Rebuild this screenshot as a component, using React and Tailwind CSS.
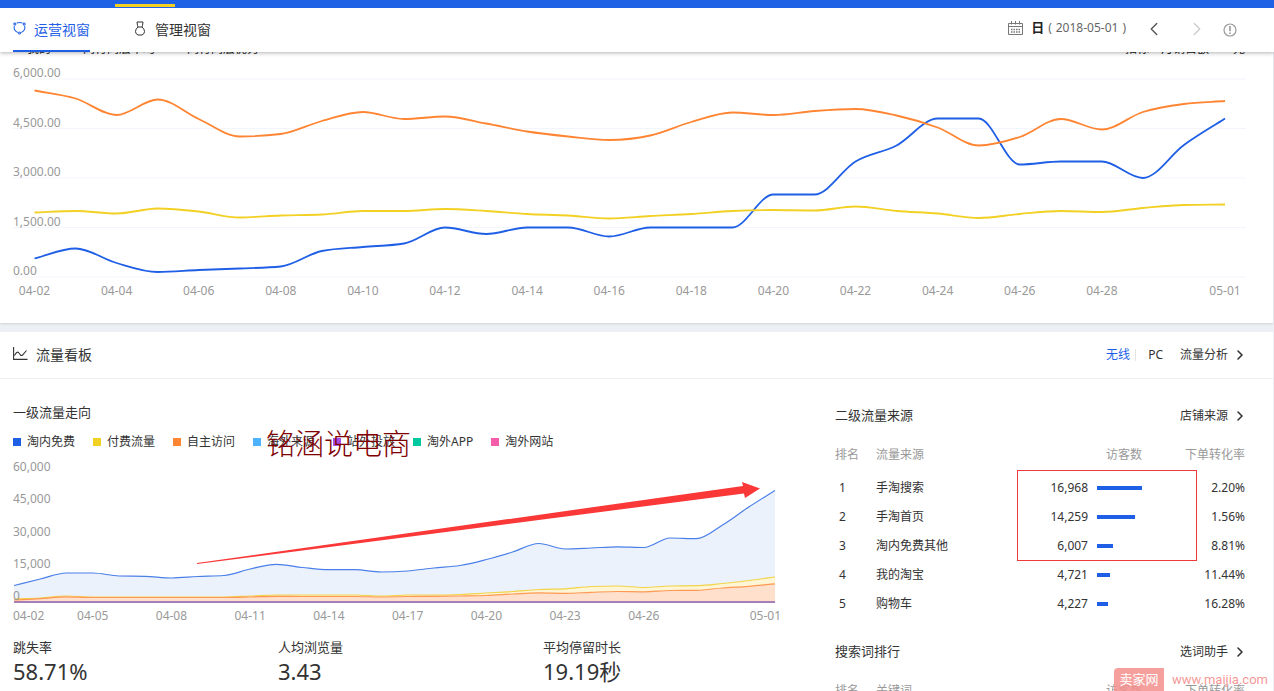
import { ChevronLeft, ChevronRight } from "lucide-react";

const trendSeries = [
  {
    color: "#1f5fe6",
    y: [258.5, 248.5, 263, 272, 270, 268.5, 266.5, 251, 247, 243.5, 227.5, 234, 227.5, 227.5, 236.5, 227.5, 227.5, 227.5, 194.5, 194.5, 161.5, 145.5, 118.5, 118.5, 164.5, 161.5, 161.5, 178, 145, 118.5],
  },
  {
    color: "#f2d024",
    y: [212.5, 211, 213.5, 208.5, 211.5, 217.5, 215.5, 214.5, 211, 211, 209, 211, 214, 215.5, 218.5, 216, 214, 211, 210, 210.5, 206.5, 211, 213.5, 218, 214, 211, 212, 208, 205, 204.5],
  },
  {
    color: "#ff8533",
    y: [90.5, 98.5, 115, 99.5, 119, 136.5, 134, 121, 112, 119, 116.5, 123.5, 131.5, 136.5, 140, 135.5, 122, 112.5, 115, 111, 109, 115.5, 127.5, 145.5, 137, 119, 129.5, 112, 104, 101],
  },
];

const trendTicks = [
  ["6,000.00", 79],
  ["4,500.00", 128.5],
  ["3,000.00", 178],
  ["1,500.00", 227.5],
  ["0.00", 277],
];

const flowSeries = [
  {
    color: "#4a7fe8",
    fill: "#ebf2fc",
    y: [585.5, 579, 573, 573, 576, 576.3, 578, 576.5, 575.5, 569, 564.3, 567.5, 569.7, 569.7, 572, 571, 568, 565.5, 559.5, 552, 543.5, 549, 548, 546.8, 547.5, 538, 538.7, 525, 507, 490.5],
  },
  {
    color: "#f2d349",
    fill: "#fdf5d3",
    y: [599, 598, 596, 597, 597, 597, 597, 597, 597, 596, 595, 595, 595, 595, 596, 595, 595, 594.5, 593, 591.5, 589.5, 588.8, 586.5, 586, 587.5, 586, 585.7, 583.5, 580.5, 577],
  },
  {
    color: "#ff9955",
    fill: "#ffe0cc",
    y: [600, 598.7, 596.8, 597.5, 597.5, 597.5, 597.5, 597.5, 597.5, 597, 596.3, 596.5, 596.5, 596.5, 597, 596.5, 596.3, 596, 595.5, 594, 592.8, 593.3, 592.3, 591.5, 591.8, 590.5, 590.3, 588, 586.3, 583.8],
  },
];

const flowTicks = [
  ["60,000", 471],
  ["45,000", 503],
  ["30,000", 536],
  ["15,000", 568],
  ["0", 600],
];

const legend = [
  { label: "淘内免费", dot: "bg-[#1f5fe6]" },
  { label: "付费流量", dot: "bg-[#f2d024]" },
  { label: "自主访问", dot: "bg-[#ff8533]" },
  { label: "海外来源", dot: "bg-[#4db3ff]" },
  { label: "站外投放", dot: "bg-[#a64de6]" },
  { label: "淘外APP", dot: "bg-[#00c9a0]" },
  { label: "淘外网站", dot: "bg-[#f75ca8]" },
];

const stats = [
  { label: "跳失率", value: "58.71%" },
  { label: "人均浏览量", value: "3.43" },
  { label: "平均停留时长", value: "19.19秒" },
];

const sources = [
  { name: "手淘搜索", visitors: 16968, rate: "2.20%" },
  { name: "手淘首页", visitors: 14259, rate: "1.56%" },
  { name: "淘内免费其他", visitors: 6007, rate: "8.81%" },
  { name: "我的淘宝", visitors: 4721, rate: "11.44%" },
  { name: "购物车", visitors: 4227, rate: "16.28%" },
];

// Monotone cubic interpolation, so flat stretches stay flat
function smoothPath(ys, x0, step) {
  const n = ys.length;
  const slopes = ys.slice(1).map((y, i) => (y - ys[i]) / step);
  const tangent = (i) => {
    if (i === 0) return slopes[0];
    if (i === n - 1) return slopes[n - 2];
    const a = slopes[i - 1];
    const b = slopes[i];
    if (a * b <= 0) return 0;
    return Math.sign(a) * Math.min(Math.abs(a) * 2, Math.abs(b) * 2, Math.abs(a + b) / 2);
  };
  let d = `M${x0},${ys[0]}`;
  for (let i = 1; i < n; i++) {
    const xa = x0 + (i - 1) * step;
    const xb = x0 + i * step;
    const h = step / 3;
    d += `C${xa + h},${ys[i - 1] + tangent(i - 1) * h} ${xb - h},${ys[i] - tangent(i) * h} ${xb},${ys[i]}`;
  }
  return d;
}

function dayLabel(i) {
  return i === 29 ? "05-01" : `04-${String(i + 2).padStart(2, "0")}`;
}

function TrendChart() {
  const step = 1190.5 / 29;
  const days = [0, 2, 4, 6, 8, 10, 12, 14, 16, 18, 20, 22, 24, 26, 29];
  return (
    <svg viewBox="0 61 1273 262" className="block w-full h-auto text-[12px] fill-[#999]">
      {trendTicks.map(([label, y]) => (
        <g key={label}>
          <line x1="13" x2="1246" y1={y} y2={y} stroke="#f3f5fc" />
          <text x="13" y={y - 2}>{label}</text>
        </g>
      ))}
      {days.map((i) => (
        <text key={i} x={34.5 + i * step} y="295" textAnchor="middle">
          {dayLabel(i)}
        </text>
      ))}
      {trendSeries.map((s) => (
        <path key={s.color} d={smoothPath(s.y, 34.5, step)} fill="none" stroke={s.color} strokeWidth="1.8" />
      ))}
    </svg>
  );
}

function FlowChart() {
  const step = 761 / 29;
  const days = [3, 6, 9, 12, 15, 18, 21, 24];
  return (
    <svg viewBox="13 454 770 176" className="block w-full h-auto text-[12px] fill-[#999]">
      {flowSeries.map((s) => {
        const d = smoothPath(s.y, 14, step);
        return (
          <g key={s.color}>
            <path d={`${d}V603H14Z`} fill={s.fill} />
            <path d={d} fill="none" stroke={s.color} strokeWidth="1.2" />
          </g>
        );
      })}
      <rect x="14" y="601" width="761" height="2" fill="#a77fb6" />
      {flowTicks.map(([label, y]) => (
        <text key={label} x="13" y={y}>{label}</text>
      ))}
      <text x="13" y="620">04-02</text>
      {days.map((i) => (
        <text key={i} x={14 + i * step} y="620" textAnchor="middle">
          {dayLabel(i)}
        </text>
      ))}
      <text x="781" y="620" textAnchor="end">05-01</text>
      <path d="M197 563 743 486 742 482 760 488.500 745 498 744 493.500 197 564Z" fill="#fb3838" />
    </svg>
  );
}

function MoreLink({ children }) {
  return (
    <a href="#" className="flex items-center gap-1 text-[12px] leading-5">
      {children}
      <ChevronRight className="w-4 h-4" strokeWidth={2.4} />
    </a>
  );
}

function Header() {
  return (
    <header className="relative z-10 bg-white shadow-[0_1px_4px_rgba(0,0,0,0.3)]">
      <div className="h-2 bg-[#1f62e6] pl-[115px] pt-1">
        <div className="w-[60px] h-[3px] bg-[#f5d020]" />
      </div>
      <div className="flex items-stretch justify-between h-11 pl-[13px] pr-[37px]">
        <nav className="flex gap-11 text-[14px]">
          <a href="#" className="flex items-center gap-2 text-[#1f5fe6] border-b-2 border-[#1f5fe6]">
            <svg viewBox="0 0 14 14" className="w-[13px] h-[14px] -mt-0.5" fill="none" stroke="currentColor" strokeWidth="1.100">
              <path d="M4 1.700Q7 .6 10 1.700M12.500 4.500A5.800 5.800 0 0 1 8.800 11.900M5.200 11.900A5.800 5.800 0 0 1 1.500 4.500" />
              <circle cx="2" cy="2.600" r="1.100" />
              <circle cx="12" cy="2.600" r="1.100" />
              <circle cx="7" cy="12.400" r="1.100" />
            </svg>
            运营视窗
          </a>
          <a href="#" className="flex items-center gap-[9px] text-[#333] border-b-2 border-transparent">
            <svg viewBox="0 0 12 15" className="w-3 h-[15px] -mt-0.5" fill="none" stroke="currentColor" strokeWidth="1">
              <path d="M3 1H9L8.500 4.500 8 6H4L3.500 4.500ZM4 6Q1.500 8 1.500 10.500T4 14H8Q10.500 13 10.500 10.500T8 6" />
            </svg>
            管理视窗
          </a>
        </nav>
        <div className="flex items-center pb-1">
          <svg viewBox="0 0 15 14" className="w-[15px] h-[14px]" fill="none" stroke="#777" strokeWidth="1">
            <path d="M.5 2.500H14.500V13.500H.5ZM.5 5.500H14.500M3.500 0V3.500M7.500 0V3.500M11.500 0V3.500" />
            <path d="M3 8.500H12M3 11H12" strokeWidth="1.300" strokeDasharray="1.500 1" />
          </svg>
          <span className="flex items-center gap-1 ml-2 text-[12px] text-[#666]">
            <b className="text-[13px] text-[#222]">日</b>
            <span className="flex gap-1">
              <span>(</span>
              <time>2018-05-01</time>
              <span>)</span>
            </span>
          </span>
          <button aria-label="前一天" className="ml-[17px] mt-0.5 text-[#555]">
            <ChevronLeft className="w-[22px] h-[22px]" strokeWidth={1.5} />
          </button>
          <button aria-label="后一天" className="ml-[21px] mt-0.5 text-[#ccc]">
            <ChevronRight className="w-[22px] h-[22px]" strokeWidth={1.5} />
          </button>
          <button aria-label="说明" className="ml-[15px] mt-1 text-[#999]">
            <svg viewBox="0 0 14 14" className="w-[14px] h-[14px]" fill="none" stroke="currentColor" strokeWidth="1.200">
              <circle cx="7" cy="7" r="6" />
              <path d="M7 3V8.300M7 9.500V11" strokeWidth="1.600" />
            </svg>
          </button>
        </div>
      </div>
    </header>
  );
}

function SourceTable() {
  return (
    <table className="w-full text-[12px] text-[#333]">
      <thead>
        <tr className="h-9 text-[#999]">
          <th className="w-[41px] text-left font-normal">排名</th>
          <th className="text-left font-normal">流量来源</th>
          <th className="text-right font-normal">访客数</th>
          <th className="w-[103px] text-right font-normal">下单转化率</th>
        </tr>
      </thead>
      <tbody>
        {sources.map((s, i) => (
          <tr key={s.name} className="h-[29px]">
            <td className="pl-1">{i + 1}</td>
            <td>{s.name}</td>
            <td>
              <div className="flex items-center justify-end gap-[9px]">
                {s.visitors.toLocaleString("en-US")}
                <div className="w-[45px]">
                  <div
                    className="h-1 bg-[#1f5fe6]"
                    style={{ width: `${(s.visitors / sources[0].visitors) * 100}%` }}
                  />
                </div>
              </div>
            </td>
            <td className="text-right">{s.rate}</td>
          </tr>
        ))}
      </tbody>
    </table>
  );
}

export default function App() {
  return (
    <div className="relative h-screen overflow-hidden bg-[#ecf0f4] text-[#333] font-['Noto_Sans','Noto_Sans_CJK_SC',sans-serif]">
      <Header />
      <main>
        <section className="mr-px bg-white shadow-[0_1px_2px_rgba(0,0,0,0.12)]">
          <div className="-mt-4 flex items-center justify-between h-[25px] pl-[27px] pr-7 text-[12px] text-[#222]">
            <div className="flex gap-8">
              <span>我的</span>
              <span>同行同层平均</span>
              <span>同行同层优秀</span>
            </div>
            <div className="flex gap-3">
              <span>指标</span>
              <span>月销售额</span>
              <span className="ml-3">元</span>
            </div>
          </div>
          <TrendChart />
        </section>

        <section className="mt-[9px] mr-px bg-white">
          <div className="flex items-center justify-between h-[47px] pl-[13px] pr-[25px] border-b border-[#eee]">
            <h2 className="flex items-center gap-2 pb-0.5 text-[14px]">
              <svg viewBox="0 0 15 14" className="w-[15px] h-[14px]" fill="none" stroke="currentColor" strokeWidth="1.100">
                <path d="M.6 0V12.400H14.500M1.500 8.500Q4 4 5.500 5.500L7.500 8Q8.500 9 9.500 8L13.500 3.500" />
              </svg>
              流量看板
            </h2>
            <div className="flex items-center text-[12px]">
              <button className="pr-[5px] leading-3 text-[#1f5fe6] border-r border-[#e5e5e5]">无线</button>
              <button className="ml-3 mr-[17px]">PC</button>
              <MoreLink>流量分析</MoreLink>
            </div>
          </div>

          <div className="flex gap-[52px] pl-[13px] pr-7">
            <div className="flex-1 min-w-0">
              <h3 className="pt-[23px] text-[13px] leading-5">一级流量走向</h3>
              <div className="relative flex gap-[18px] mt-[10px] mb-0.5 text-[12px] leading-5">
                {legend.map((item) => (
                  <span key={item.label} className="flex items-center gap-[6px]">
                    <i className={`w-2 h-2 ${item.dot}`} />
                    {item.label}
                  </span>
                ))}
                <span className="absolute left-[253px] top-0 text-[29px] leading-6 font-light text-[#800000] whitespace-nowrap">
                  铭涵说电商
                </span>
              </div>
              <FlowChart />
              <div className="grid grid-cols-[265px_265px_1fr] mt-[7px]">
                {stats.map((s) => (
                  <div key={s.label}>
                    <div className="text-[13px] leading-5">{s.label}</div>
                    <div className="text-[22px] leading-7">{s.value}</div>
                  </div>
                ))}
              </div>
            </div>

            <div className="w-[410px] pt-[27px]">
              <div className="flex items-center justify-between h-5 -mr-[3px]">
                <h3 className="text-[13px]">二级流量来源</h3>
                <MoreLink>店铺来源</MoreLink>
              </div>
              <div className="relative mt-[11px]">
                <SourceTable />
                <div className="absolute left-[182px] top-[33px] w-[180px] h-[91px] border border-[#f03a3a]" />
              </div>
              <div className="flex items-center justify-between h-5 mt-6 -mr-[3px]">
                <h3 className="text-[13px]">搜索词排行</h3>
                <MoreLink>选词助手</MoreLink>
              </div>
              <table className="w-full mt-[11px] text-[12px] text-[#999]">
                <thead>
                  <tr className="h-9">
                    <th className="w-[41px] text-left font-normal">排名</th>
                    <th className="text-left font-normal">关键词</th>
                    <th className="text-right font-normal">访客数</th>
                    <th className="w-[103px] text-right font-normal">下单转化率</th>
                  </tr>
                </thead>
              </table>
            </div>
          </div>
        </section>
      </main>

      <div className="absolute right-[6px] bottom-0 flex items-center gap-2 text-[13px] text-[#f59a98]">
        <span className="w-[50px] h-[23px] text-center leading-[23px] text-white bg-[#f58f8d]/85 rounded-tl">卖家网</span>
        <span className="font-['Roboto',sans-serif]">www.maijia.com</span>
      </div>
    </div>
  );
}
